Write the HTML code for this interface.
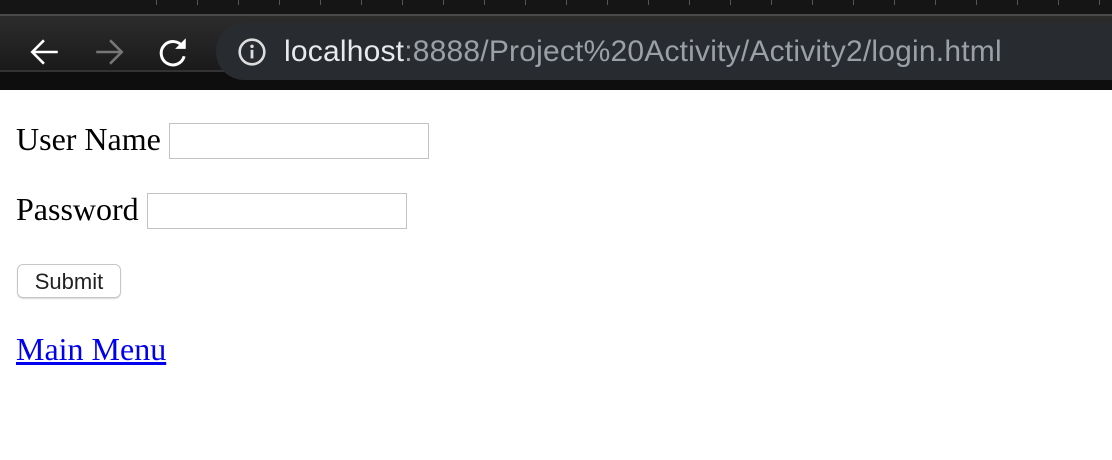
<!DOCTYPE html>
<html><head><style>
body{margin:0;width:1112px;height:460px;background:#fff;position:relative;overflow:hidden;font-family:"Liberation Serif",serif}
.a{position:absolute}
.t{font-size:32px;line-height:1;color:#000;white-space:nowrap}
.in{border:1px solid #c2c2c2;background:#fff;box-sizing:border-box}
</style></head><body>
<div class="a" style="left:0;top:0;width:1112px;height:14px;background:#151515"></div>
<div class="a" style="left:156px;top:0;width:960px;height:5px;background:repeating-linear-gradient(90deg,#555 0,#555 1px,transparent 1px,transparent 41px)"></div>
<div class="a" style="left:0;top:14px;width:1112px;height:2px;background:#4a4a4a"></div>
<div class="a" style="left:0;top:16px;width:1112px;height:54px;background:linear-gradient(#2c2c2c,#1a1a1a)"></div>
<div class="a" style="left:0;top:70px;width:1112px;height:2px;background:#333"></div>
<div class="a" style="left:0;top:72px;width:1112px;height:18px;background:#0e0e0e"></div>
<div class="a" style="left:216px;top:23px;width:920px;height:57px;background:#282b2f;border-radius:28px 0 0 28px"></div>
<svg class="a" style="left:28px;top:35px" width="34" height="34" viewBox="0 0 32 32"><path d="M28 16H4M15 5L4 16l11 11" stroke="#fff" stroke-width="2.4" fill="none"/></svg>
<svg class="a" style="left:92px;top:35px" width="34" height="34" viewBox="0 0 32 32"><path d="M4 16h24M17 5l11 11-11 11" stroke="#777" stroke-width="2.4" fill="none"/></svg>
<svg class="a" style="left:156px;top:35px" width="34" height="34" viewBox="0 0 32 32"><path d="M25 11A11 11 0 1 0 26.5 20" stroke="#fff" stroke-width="2.8" fill="none"/><path d="M18 13h10V3z" fill="#fff"/></svg>
<svg class="a" style="left:237px;top:37px" width="30" height="30" viewBox="0 0 28 28"><circle cx="14" cy="14" r="11.5" stroke="#ddd" stroke-width="2.4" fill="none"/><rect x="12.7" y="12" width="2.6" height="8" fill="#ddd"/><circle cx="14" cy="8.7" r="1.6" fill="#ddd"/></svg>
<div class="a" style="left:284px;top:35px;font-family:'Liberation Sans',sans-serif;font-size:30px;color:#9aa0a6;white-space:nowrap;letter-spacing:0.2px"><span style="color:#e8eaed">localhost</span>:8888/Project%20Activity/Activity2/login.html</div>

<div class="a t" style="left:16px;top:123px">User Name</div>
<div class="a in" style="left:169px;top:123px;width:260px;height:36px"></div>
<div class="a t" style="left:16px;top:193px">Password</div>
<div class="a in" style="left:147px;top:193px;width:260px;height:36px"></div>
<div class="a" style="left:17px;top:264px;width:104px;height:34px;border:1px solid #c6c6c6;border-radius:6px;box-sizing:border-box;box-shadow:0 1px 1px rgba(0,0,0,.15);font-family:'Liberation Sans',sans-serif;font-size:22px;line-height:33px;text-align:center;color:#222">Submit</div>
<div class="a t" style="left:16px;top:333px;color:#0000ee;text-decoration:underline">Main Menu</div>
</body></html>
